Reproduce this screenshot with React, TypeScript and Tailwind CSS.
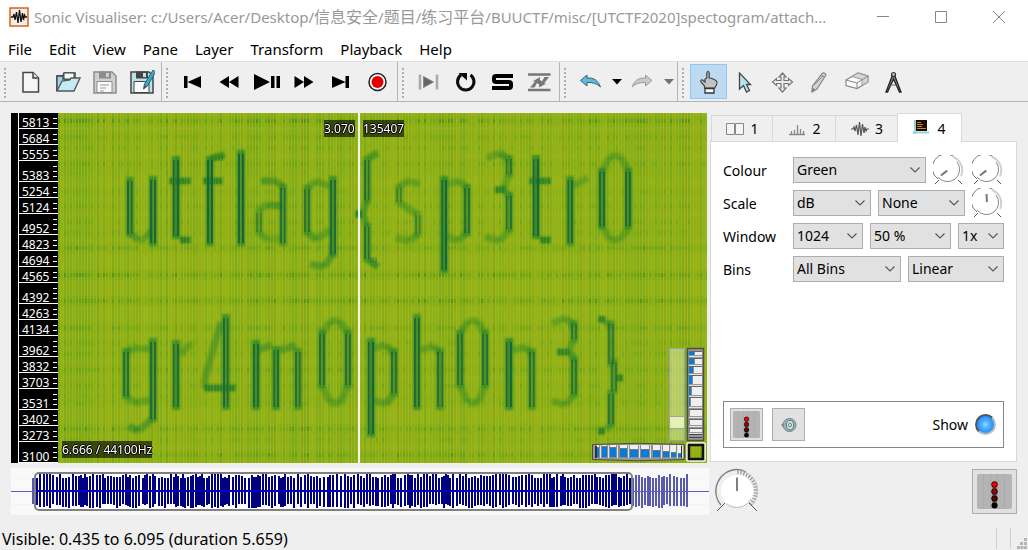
import React, { useState } from "react";
import type { ReactNode } from "react";
import clsx from "clsx";

/* ---------- helpers ---------- */

const noise = (n: number) => {
  const v = Math.sin(n * 127.1 + 311.7) * 43758.5453;
  return v - Math.floor(v);
};

/* ---------- spectrogram ---------- */

// Strong tones: [time position, top, bottom, weight]
const tones: [number, number, number, number][] = [
  [130, 179, 235, 0.9], [153, 178, 244, 1], [176, 158, 237, 1], [210, 158, 244, 1],
  [241, 152, 244, 1], [283, 186, 244, 0.8], [259, 211, 233, 0.5], [307, 187, 233, 0.7],
  [333, 178, 255, 0.9], [367, 158, 201, 0.8], [367, 225, 260, 0.8], [399, 186, 203, 0.5],
  [418, 213, 235, 0.5], [444, 178, 271, 1], [467, 186, 234, 0.8], [509, 157, 175, 0.7],
  [509, 194, 230, 0.8], [536, 157, 237, 1], [570, 178, 244, 0.9], [602, 170, 227, 0.9],
  [628, 170, 227, 0.9], [126, 350, 397, 0.8], [153, 340, 420, 0.9], [176, 342, 408, 0.9],
  [226, 316, 408, 0.9], [256, 342, 408, 0.9], [276, 348, 408, 0.9], [298, 350, 408, 0.8],
  [322, 332, 386, 0.8], [348, 332, 386, 0.8], [371, 340, 435, 1], [394, 350, 394, 0.8],
  [417, 316, 408, 0.9], [440, 350, 408, 0.8], [460, 332, 386, 0.8], [485, 332, 386, 0.8],
  [509, 340, 408, 1], [532, 350, 408, 0.8], [574, 322, 340, 0.7], [574, 358, 395, 0.7],
  [611, 322, 365, 0.6], [614, 360, 392, 0.6], [611, 392, 425, 0.7],
];

// Short sweeps: [x1, y1, x2, y2, weight]
const sweeps: [number, number, number, number, number][] = [
  [132, 235, 138, 240, 0.5], [138, 240, 146, 239, 0.4], [146, 238, 152, 230, 0.5],
  [169, 181, 191, 181, 0.7], [180, 240, 191, 240, 0.8],
  [203, 181, 223, 181, 0.7], [211, 158, 225, 155, 0.7],
  [261, 181, 277, 181, 0.6], [277, 181, 284, 188, 0.5], [259, 210, 268, 204, 0.4],
  [268, 205, 282, 206, 0.6], [260, 234, 268, 240, 0.4], [268, 240, 281, 238, 0.3],
  [308, 188, 315, 181, 0.4], [315, 181, 330, 186, 0.4], [308, 233, 316, 240, 0.5],
  [316, 240, 330, 230, 0.4], [310, 264, 324, 267, 0.5], [324, 267, 333, 254, 0.5],
  [368, 158, 378, 153, 0.6], [355, 214, 363, 214, 0.8], [363, 213, 367, 200, 0.6],
  [363, 214, 367, 227, 0.6], [368, 260, 378, 267, 0.7],
  [399, 188, 406, 181, 0.4], [406, 181, 420, 184, 0.4], [400, 203, 416, 214, 0.4],
  [418, 234, 410, 241, 0.4], [410, 241, 396, 238, 0.4],
  [447, 184, 460, 181, 0.4], [460, 181, 467, 188, 0.4], [447, 237, 458, 241, 0.4],
  [458, 241, 468, 232, 0.4],
  [487, 158, 500, 153, 0.4], [500, 153, 509, 160, 0.6], [495, 190, 506, 189, 0.7],
  [509, 174, 504, 188, 0.4], [504, 189, 510, 198, 0.5], [510, 230, 500, 241, 0.4],
  [500, 241, 485, 237, 0.4],
  [529, 181, 551, 181, 0.7], [540, 240, 551, 240, 0.8],
  [573, 186, 588, 178, 0.4], [602, 172, 610, 156, 0.4], [610, 156, 620, 156, 0.4],
  [620, 156, 629, 172, 0.4], [602, 226, 610, 240, 0.4], [610, 240, 620, 240, 0.4],
  [620, 240, 629, 226, 0.4],
  [127, 352, 133, 348, 0.5], [133, 348, 150, 349, 0.4], [127, 397, 135, 403, 0.4],
  [135, 403, 150, 400, 0.4], [129, 426, 138, 431, 0.6], [138, 431, 152, 419, 0.5],
  [181, 355, 185, 348, 0.4], [185, 348, 192, 345, 0.4],
  [221, 322, 205, 378, 0.5], [205, 378, 205, 388, 0.5], [204, 388, 236, 388, 0.7],
  [258, 350, 272, 345, 0.5], [280, 350, 296, 346, 0.5],
  [322, 334, 330, 321, 0.4], [330, 321, 340, 321, 0.4], [340, 321, 348, 334, 0.4],
  [322, 386, 330, 402, 0.4], [330, 403, 340, 403, 0.4], [340, 403, 348, 386, 0.4],
  [374, 348, 386, 345, 0.4], [386, 345, 394, 354, 0.5], [374, 401, 386, 404, 0.4],
  [386, 404, 394, 394, 0.5], [421, 350, 434, 346, 0.4], [434, 346, 440, 354, 0.4],
  [460, 334, 468, 321, 0.4], [468, 321, 478, 321, 0.4], [478, 321, 485, 334, 0.4],
  [460, 386, 468, 402, 0.4], [468, 403, 478, 403, 0.4], [478, 403, 485, 386, 0.4],
  [513, 350, 526, 347, 0.4], [526, 347, 532, 356, 0.4],
  [552, 323, 566, 318, 0.4], [566, 318, 574, 326, 0.5], [574, 340, 568, 352, 0.4],
  [557, 352, 570, 352, 0.7], [570, 352, 575, 362, 0.5], [575, 394, 565, 405, 0.4],
  [565, 405, 552, 401, 0.4],
  [598, 319, 606, 320, 0.7], [606, 321, 611, 328, 0.5], [616, 378, 623, 378, 0.8],
  [611, 424, 606, 430, 0.4], [598, 431, 605, 431, 0.8],
];

const harmonics: [number, number][] = [
  [121, 0.8], [137, 0.5], [148, 0.4], [164, 0.5], [173, 0.3], [192, 0.4], [206, 0.4],
  [222, 0.4], [233, 0.4], [248, 0.7], [275, 0.8], [301, 0.8], [328, 0.6], [343, 0.4],
  [354, 0.4], [370, 0.5], [386, 0.4], [396, 0.3], [403, 0.4], [429, 0.7], [440, 0.4],
  [455, 0.7],
];

const columns = Array.from({ length: 217 }, (_, i) => ({
  x: 58 + i * 3,
  dark: noise(i) * 0.55,
  light: noise(i + 900),
}));

function Spectrogram() {
  const dots = ["", "", ""];
  harmonics.forEach(([y, strength], r) => {
    columns.forEach(({ x, dark }, c) => {
      const level = strength * (dark * 1.1 + noise(r * 331 + c) * 0.5);
      if (level > 0.25) {
        dots[level > 0.68 ? 2 : level > 0.45 ? 1 : 0] += `M${x} ${y - 2}h2v4h-2z`;
      }
    });
  });
  return (
    <svg
      role="img"
      aria-label="Spectrogram reading utflag{sp3tr0gr4m0ph0n3}"
      viewBox="58 113 649 350"
      preserveAspectRatio="none"
      className="absolute inset-0 h-full w-full"
    >
      <defs>
        <filter id="soft" x="-5%" y="-5%" width="110%" height="110%">
          <feGaussianBlur stdDeviation="1.3" />
        </filter>
      </defs>
      <rect x="58" y="113" width="649" height="350" fill="#9cb71a" />
      <g fill="#4f9c20" filter="url(#soft)">
        {harmonics.map(([y, s]) => (
          <rect key={y} x="58" y={y - 5} width="649" height="10" opacity={s * 0.16} />
        ))}
      </g>
      {columns.map(({ x, dark, light }) => (
        <g key={x}>
          <rect x={x} y="113" width="2" height="350" fill="#57991e" opacity={0.08 + dark * 0.6} />
          {light > 0.6 && <rect x={x + 2} y="113" width="1" height="350" fill="#aab216" opacity="0.8" />}
        </g>
      ))}
      <path d={dots[0]} fill="#3f8f22" opacity="0.18" />
      <path d={dots[1]} fill="#35862a" opacity="0.28" />
      <path d={dots[2]} fill="#2b7c2c" opacity="0.45" />
      <g filter="url(#soft)">
        {tones.map(([x, a, b, w], i) => (
          <rect key={i} x={x - 4} y={a - 2} width="8" height={b - a + 4} fill="#22862a" opacity={w * 0.8} />
        ))}
        {sweeps.map(([x1, y1, x2, y2, w], i) => (
          <line key={i} x1={x1} y1={y1} x2={x2} y2={y2} stroke="#1f8228" strokeWidth="7" opacity={w * 0.95} />
        ))}
      </g>
      <g fill="#17563f">
        {tones.map(([x, a, b, w], i) => (
          <g key={i} opacity={w * 0.75}>
            <rect x={x - 3} y={a + 2} width="2" height={b - a - 3} />
            <rect x={x + 1} y={a + 2} width="2" height={b - a - 3} />
          </g>
        ))}
      </g>
      <g fill="#1c6a35" opacity="0.35">
        {sweeps.filter((s) => s[4] >= 0.7).map(([x1, y1, x2], i) => (
          <g key={i}>
            {Array.from({ length: Math.floor((x2 - x1) / 3) }, (_, k) => (
              <rect key={k} x={x1 + 1 + k * 3} y={y1 - 3} width="2" height="6" />
            ))}
          </g>
        ))}
      </g>
      {/* faint column texture carried over the tones */}
      {columns.filter((c) => c.light > 0.75).map(({ x }) => (
        <rect key={x} x={x + 2} y="113" width="1" height="350" fill="#a5b018" opacity="0.25" />
      ))}
    </svg>
  );
}

const wheelH = [
  [597, 2, 9], [602, 5, 10], [610, 6, 9], [620, 7, 8], [630, 8, 7],
  [641, 8, 7], [653, 7, 6], [663, 6, 5], [671, 5, 4], [678, 3, 3],
];
const wheelV = [
  [352, 3, 5], [359, 5, 5], [367, 6, 4], [376, 8, 3], [387, 8, 2],
  [398, 8, 1], [410, 6, 0], [420, 5, 0], [429, 3, 0],
];

function PaneNavigator() {
  return (
    <svg width="115" height="116" viewBox="592 347 115 116" className="absolute right-0 bottom-0">
      <rect x="669.5" y="348.5" width="15" height="92" fill="#e8f5c8" fillOpacity="0.45" stroke="#a39fae" />
      <rect x="669.5" y="416.5" width="15" height="12" fill="#f6ffd8" fillOpacity="0.7" stroke="#a39fae" />
      <path d="M592.5 444.5Q638 442 684.5 444.5V459.500Q638 462 592.5 459.500Z" fill="#989898" stroke="#4b4f3d" />
      <rect x="595" y="446" width="88" height="12" fill="#8c8c8c" />
      <rect x="595" y="446" width="2" height="12" fill="#333" />
      <rect x="600" y="446" width="1" height="12" fill="#fff" />
      <rect x="681" y="446" width="1" height="12" fill="#333" />
      {wheelH.map(([x, w, h]) => (
        <g key={x}>
          <rect x={x} y="445" width={w} height="12" fill="#efefef" />
          <rect x={x} y={457 - h} width={w} height={h} fill="#087bd8" />
          <rect x={x} y={456 - h} width={w} height="1" fill="#777" />
          <rect x={x + w + 1} y="445" width="1" height="13" fill="#e2e2e2" />
        </g>
      ))}
      <rect x="687.5" y="348.5" width="16" height="92" fill="#989898" stroke="#4b4f3d" strokeWidth="1.500" />
      {wheelV.map(([y, h, w]) => (
        <g key={y}>
          <rect x="689" y={y - 1} width="13" height="1" fill="#666" />
          <rect x="689" y={y} width="13" height={h} fill="#efefef" />
          <rect x="689" y={y} width={w} height={h} fill="#087bd8" />
          <rect x={689 + w} y={y} width="1" height={h} fill="#888" />
          <rect x="689" y={y + h + 1} width="13" height="1" fill="#e2e2e2" />
        </g>
      ))}
      <path d="M689 434.500h13M689 437.500h13" stroke="#444" />
      <rect x="687" y="443" width="18" height="18" rx="1" fill="none" stroke="#fff" strokeWidth="1.500" />
      <rect x="689" y="445" width="14" height="14" fill="none" stroke="#111" strokeWidth="2.500" />
    </svg>
  );
}

const scaleLabels: { value: string; tall?: boolean }[] = [
  { value: "5813" }, { value: "5684" }, { value: "5555" }, { value: "5383", tall: true },
  { value: "5254" }, { value: "5124" }, { value: "4952", tall: true }, { value: "4823" },
  { value: "4694" }, { value: "4565" }, { value: "4392", tall: true }, { value: "4263" },
  { value: "4134" }, { value: "3962", tall: true }, { value: "3832" }, { value: "3703" },
  { value: "3531", tall: true }, { value: "3402" }, { value: "3273" }, { value: "3100", tall: true },
];

function FrequencyScale() {
  return (
    <div className="flex w-[47px] shrink-0 bg-black pl-[7px]">
      <div className="flex w-full flex-col border-l border-white">
        {scaleLabels.map(({ value, tall }) => (
          <div
            key={value}
            className={clsx(
              "flex items-end justify-between border-b border-white pl-[3px] text-[12px] leading-[10px] text-white",
              tall ? "h-[21px]" : "h-[16px]",
            )}
          >
            <span>{value}</span>
            <span className="flex flex-col gap-[4px] pr-px pb-[4px]">
              {tall && <i className="h-px w-[4px] bg-white" />}
              <i className="h-px w-[4px] bg-white" />
              <i className="h-px w-[4px] bg-white" />
            </span>
          </div>
        ))}
      </div>
    </div>
  );
}

const readout =
  "absolute bg-black/60 text-[12px] leading-[17px] text-white [text-shadow:1px_0_#000,-1px_0_#000,0_1px_#000,0_-1px_#000]";

/* ---------- overview waveform ---------- */

function Overview() {
  let d = "";
  let x = 32;
  let n = 0;
  while (x < 689) {
    const run = noise(n + 40) > 0.84 ? 2 + Math.floor(noise(n + 80) * 4) : 1;
    for (let k = 0; k < run && x < 689; k++) {
      const top = 474 + Math.floor(noise(n * 7 + k) * 5);
      const bottom = 508 - Math.floor(noise(n * 11 + k) * 5);
      d += `M${x} ${top}h2v${bottom - top}h-2z`;
      x += 2;
    }
    x += noise(n + 7) > 0.85 ? 2 : 1;
    n++;
  }
  return (
    <svg
      role="img"
      aria-label="Waveform overview"
      viewBox="11 468 698 47"
      preserveAspectRatio="none"
      className="block h-[47px] w-full"
      shapeRendering="crispEdges"
    >
      <rect x="11" y="468" width="698" height="47" fill="#f9f9f9" />
      <path d="M11 478.500h698M11 504.500h698" stroke="#f0f0f0" />
      <rect x="35" y="473" width="597" height="36" rx="4" fill="#fff" />
      <path d={d} fill="#000080" />
      <path d="M11 491h698" stroke="#0000b0" strokeWidth="1" />
      <path d="M36 491h596" stroke="#0000b4" strokeWidth="2" />
      <path d="M11 468h24v47h-24zM632 468h77v47h-77z" fill="#f9f9f9" opacity="0.36" />
      <rect x="35" y="473" width="597" height="37" rx="4" fill="none" stroke="#808080" strokeWidth="2" shapeRendering="auto" />
    </svg>
  );
}

/* ---------- toolbar ---------- */

function Icon({ children }: { children: ReactNode }) {
  return (
    <svg width="26" height="26" viewBox="0 0 26 26" fill="none" aria-hidden="true">
      {children}
    </svg>
  );
}

function Tool({ label, active, children }: { label: string; active?: boolean; children: ReactNode }) {
  return (
    <button
      type="button"
      aria-label={label}
      aria-pressed={active}
      className={clsx(
        "flex h-[35px] w-[37px] shrink-0 items-center justify-center border",
        active ? "border-[#8fc8f6] bg-[#bedaf2]" : "border-transparent",
      )}
    >
      {children}
    </button>
  );
}

function ToolGroup({ children, last }: { children: ReactNode; last?: boolean }) {
  return (
    <div className={clsx("flex items-center", !last && "border-r border-[#b4b4b4] pr-px")}>
      <svg width="12" height="34" viewBox="0 0 12 34" aria-hidden="true">
        <path d="M5 3v31" stroke="#b0b0b0" strokeWidth="2" strokeDasharray="2 2" />
      </svg>
      {children}
    </div>
  );
}

const MenuArrow = ({ color, label }: { color: string; label: string }) => (
  <button type="button" aria-label={label} className="flex h-[35px] w-[15px] items-center justify-center">
    <svg width="10" height="6" viewBox="0 0 10 6" aria-hidden="true">
      <path d="M0 0h10L5 5.500z" fill={color} />
    </svg>
  </button>
);

const floppy = (body: string, line: string) => (
  <>
    <path d="M2 3h18l4 4v17H2z" fill={body} stroke={line} strokeWidth="1.500" />
    <path d="M7 2.500h12v7H7z" fill={line} />
    <path d="M14 4h3v4h-3z" fill={body} />
    <path d="M5 12.500h15v11H5z" fill="#fafafa" stroke={line} />
  </>
);

function Toolbar() {
  return (
    <div role="toolbar" className="flex h-[41px] shrink-0 border-t border-b border-t-[#e0e0e0] border-b-[#b4b4b4] bg-[#efefef]">
      <ToolGroup>
        <Tool label="New">
          <Icon>
            <path d="M5 3.500h10l5.500 5.500v14H5z" fill="#f6f6f6" stroke="#444" strokeWidth="1.500" />
            <path d="M15 3.500V9h5.500" fill="#ddd" stroke="#444" strokeWidth="1.500" />
          </Icon>
        </Tool>
        <Tool label="Open">
          <Icon>
            <path d="M2 22V7h6l1-3h11v6" fill="#fff" stroke="#444" strokeWidth="1.500" />
            <path d="M2 22V7h6v3h13v3" fill="#9fd4e4" stroke="#444" strokeWidth="1.300" />
            <path d="M9 4h10v6H9z" fill="#fafafa" stroke="#444" />
            <path d="M2 22L7 12l8-1 1-2h9l-6 13z" fill="#c3eaf5" stroke="#555" strokeWidth="1.300" />
          </Icon>
        </Tool>
        <Tool label="Save">
          <Icon>
            {floppy("#d0d0d0", "#8d8d8d")}
            <path d="M8 16h9M8 19h6M8 22h4" stroke="#9a9a9a" strokeWidth="1.200" />
          </Icon>
        </Tool>
        <Tool label="Save As">
          <Icon>
            {floppy("#b9e4ef", "#444")}
            <path d="M24 1l2.500 2-8 14-4 3 1-5z" fill="#3ba8c8" stroke="#2c6373" />
            <path d="M14.500 20l1-4 2.500 1.500z" fill="#555" />
          </Icon>
        </Tool>
      </ToolGroup>
      <ToolGroup>
        <Tool label="Rewind to start">
          <Icon><path d="M4 7h3.500v12H4zM21 7v12L7.500 13z" fill="#000" /></Icon>
        </Tool>
        <Tool label="Rewind">
          <Icon><path d="M12 7v12L2.500 13zM21.500 7v12L12 13z" fill="#000" /></Icon>
        </Tool>
        <Tool label="Play / Pause">
          <Icon><path d="M0 5l16 8-16 8zM17 7h3.500v12H17zM22.500 7H26v12h-3.500z" fill="#000" /></Icon>
        </Tool>
        <Tool label="Fast forward">
          <Icon><path d="M3.500 7v12l9.500-6zM13 7v12l9.500-6z" fill="#000" /></Icon>
        </Tool>
        <Tool label="Fast forward to end">
          <Icon><path d="M4 7v12l13.500-6zM17.500 7H21v12h-3.500z" fill="#000" /></Icon>
        </Tool>
        <Tool label="Record">
          <Icon>
            <circle cx="12.500" cy="13" r="8.500" fill="#fff" stroke="#222" strokeWidth="1.500" />
            <circle cx="12.500" cy="13" r="6" fill="#e60000" />
          </Icon>
        </Tool>
      </ToolGroup>
      <ToolGroup>
        <Tool label="Constrain playback to selection">
          <Icon>
            <path d="M4 5.500v15M21 5.500v15" stroke="#a9a9a9" strokeWidth="2.500" />
            <path d="M7.500 7.500l10 5.500-10 5.500z" fill="#666" stroke="#888" />
          </Icon>
        </Tool>
        <Tool label="Loop playback">
          <Icon>
            <path d="M17.500 6a8.200 8.200 0 1 1-9.500 0" stroke="#0a0a0a" strokeWidth="3" />
            <path d="M5.500 4h8.500v7.500z" fill="#0a0a0a" />
          </Icon>
        </Tool>
        <Tool label="Solo current pane">
          <Icon>
            <path d="M23 7H6Q4 7 4 9v2q0 2 2 2h13q2 0 2 2v2q0 2-2 2H2" stroke="#000" strokeWidth="4" />
          </Icon>
        </Tool>
        <Tool label="Align file timelines">
          <Icon>
            <path d="M1 5.500h22.500M1 21h22.500" stroke="#777" strokeWidth="2.500" />
            <path d="M3 18.500l5-6H5.500L13 8l-.5 8-2.500-2-2.500 4.500zM22 8l-5 6.500h2.500L12 18.500l.5-8 2.500 2L17.500 8z" fill="#777" />
          </Icon>
        </Tool>
      </ToolGroup>
      <ToolGroup>
        <Tool label="Undo">
          <Icon><path d="M2.500 11.500L9 6v3q10-1 13.500 9-5-5-13.500-4.500v3.500z" fill="#5bbcdc" stroke="#38606c" /></Icon>
        </Tool>
        <MenuArrow color="#000" label="Undo history" />
        <Tool label="Redo">
          <Icon><path d="M22 11.500L15.500 6v3Q5.500 8 2 18q5-5 13.500-4.500v3.500z" fill="#c9c9c9" stroke="#9c9c9c" /></Icon>
        </Tool>
        <MenuArrow color="#727272" label="Redo history" />
      </ToolGroup>
      <ToolGroup last>
        <Tool label="Navigate" active>
          <Icon>
            <path d="M8.500 19v-2L5 13q-.8-2.500 1.200-2.200L9 13V10l1.800-1V4q1.200-3.500 2.400 0v5l2.300.300 2 1L20 11.500q1.500 1 .8 3.500l-2 4z" fill="#c2c2c2" stroke="#444" strokeWidth="1.200" />
            <path d="M9 19.500h9V24H9z" fill="#fff" stroke="#333" strokeWidth="1.300" />
          </Icon>
        </Tool>
        <Tool label="Select">
          <Icon>
            <path d="M6.500 4v16l4-3.500 3 6.500 3-1.500-3-6h4z" fill="#b7e4ef" stroke="#444" strokeWidth="1.300" />
          </Icon>
        </Tool>
        <Tool label="Edit">
          <Icon>
            <path d="M12.500 4l3.500 4h-2v3.500h4.500v-2l4 3.500-4 3.500v-2H14V19h2l-3.500 4L9 19h2v-4.500H6.500v2l-4-3.500 4-3.500v2H11V8H9z" fill="#eee" stroke="#777" strokeWidth="1.200" />
          </Icon>
        </Tool>
        <Tool label="Draw">
          <Icon>
            <path d="M15.500 4q3-.500 3.500 2L10 20l-5 3 .5-6z" fill="#d2d2d2" stroke="#888" strokeWidth="1.200" />
            <path d="M14 6l4 2.500M7 16l9-9M5 23l.500-4 2.500 2z" stroke="#888" fill="#777" />
          </Icon>
        </Tool>
        <Tool label="Erase">
          <Icon>
            <path d="M2 11l12-7 10 3v6l-11 6.500-11-3z" fill="#fafafa" stroke="#888" strokeWidth="1.200" />
            <path d="M8 7.500L14 4l10 3v6l-6 3.500V10.500z" fill="#d4d4d4" stroke="#999" />
            <path d="M2 11l11 3L24 7M13 14v5.500" stroke="#888" />
          </Icon>
        </Tool>
        <Tool label="Measure">
          <Icon>
            <path d="M11.500 6L5 23h1.500l6-13 6 13H20L13.500 6" fill="#888" stroke="#222" strokeWidth="1.300" />
            <circle cx="12.500" cy="5.500" r="2" fill="#bbb" stroke="#333" strokeWidth="1.200" />
            <path d="M9 17.500l1.500-1.500h4l1.500 1.500" stroke="#666" />
          </Icon>
        </Tool>
      </ToolGroup>
    </div>
  );
}

/* ---------- property panel ---------- */

function Combo({ label, value, className }: { label: string; value: string; className: string }) {
  return (
    <span className={clsx("relative block h-[26px] shrink-0", className)}>
      <select
        aria-label={label}
        defaultValue={value}
        className="h-full w-full appearance-none border border-[#adadad] bg-[#e1e1e1] pl-[3px] text-[14px] leading-[24px] text-black"
      >
        <option>{value}</option>
      </select>
      <svg width="10" height="6" viewBox="0 0 10 6" className="pointer-events-none absolute top-[10px] right-[6px]" aria-hidden="true">
        <path d="M.5.500L5 5 9.500.5" fill="none" stroke="#555" strokeWidth="1.100" />
      </svg>
    </span>
  );
}

function Dial({ label, angle }: { label: string; angle: number }) {
  const rad = (angle * Math.PI) / 180;
  const dx = Math.sin(rad);
  const dy = -Math.cos(rad);
  return (
    <label className="relative block h-[30px] w-[32px] shrink-0">
      <svg width="32" height="30" viewBox="0 0 32 30" fill="none" aria-hidden="true">
        <path d="M5 24A13.500 13.500 0 0 1 21 1.500" stroke="#777" strokeWidth="1" />
        <path d="M20 2A14 14 0 0 1 28 21" stroke="#d0d0d0" strokeWidth="2" />
        <path d="M24 7A12 12 0 0 1 5 22" stroke="#888" strokeWidth="1" />
        <path d="M2 29l4-4M29 29l-4-4" stroke="#555" />
        <path
          d={`M${15 + dx} ${15 + dy}L${15 + dx * 9} ${15 + dy * 9}`}
          stroke="#777"
          strokeWidth="2"
        />
      </svg>
      <input type="range" aria-label={label} className="absolute inset-0 h-full w-full opacity-0" />
    </label>
  );
}

function Row({ label, children }: { label: string; children: ReactNode }) {
  return (
    <div className="flex h-[26px] items-center">
      <span className="w-[70px] shrink-0 text-[14px]">{label}</span>
      <div className="flex items-center gap-[7px]">{children}</div>
    </div>
  );
}

function LevelMeter({ size }: { size: number }) {
  return (
    <svg width={size} height={size} viewBox="0 0 35 35" aria-hidden="true">
      <rect width="35" height="35" rx="2" fill="#b4b4b4" />
      <path d="M6.500 0v35M13.500 0v35M20.500 0v35M27.500 0v35" stroke="#aaa" />
      <path d="M17.500 8v24" stroke="#777" strokeWidth="5" />
      <circle cx="17.500" cy="10.500" r="2.800" fill="#f00" stroke="#300" />
      <circle cx="17.500" cy="17.500" r="2.800" fill="#a80000" stroke="#200" />
      <circle cx="17.500" cy="24.500" r="2.800" fill="#5a0000" stroke="#100" />
      <circle cx="17.500" cy="31.500" r="3" fill="#000" />
    </svg>
  );
}

const tabIcons: ReactNode[] = [
  <svg key="1" width="18" height="14" viewBox="0 0 18 14" fill="#f5f5f5" stroke="#888">
    <path d="M.5 1.500h8v11h-8zM9.500 1.500h8v11h-8z" />
  </svg>,
  <svg key="2" width="18" height="14" viewBox="0 0 18 14" stroke="#888">
    <path d="M1 12.500h16M3.500 12V9M6.500 12V8M9.500 12V3M12.500 12V7M15.500 12V9" strokeWidth="1.300" />
  </svg>,
  <svg key="3" width="18" height="16" viewBox="0 0 18 16" stroke="#555" fill="none">
    <path d="M0 8h2l1-2 1 4 1.500-6 1.500 10L8.500 1l1.500 14 1.500-12L13 12l1-6 1 4 1-2h2" strokeWidth="1.200" />
  </svg>,
  <svg key="4" width="18" height="18" viewBox="0 0 18 18">
    <path d="M2 1v14M0 13.500h16" stroke="#8fd4e8" strokeWidth="2" />
    <path d="M3 1h11v11H3z" fill="#1c0e00" />
    <path d="M4 3.500h4M4 5.500h6M4 7.500h5M4 9.500h9" stroke="#c9822c" />
  </svg>,
];

function LayerPanel() {
  const [show, setShow] = useState(true);
  return (
    <section className="flex min-h-0 flex-1 flex-col">
      <div role="tablist" className="flex h-[28px] items-end pl-px">
        {tabIcons.map((icon, i) => {
          const selected = i === 3;
          return (
            <button
              key={i}
              type="button"
              role="tab"
              aria-selected={selected}
              className={clsx(
                "flex items-center justify-center gap-[6px] border-t border-[#d9d9d9] text-[14px]",
                selected
                  ? "relative z-10 -mb-px h-[29px] w-[65px] border-x bg-white"
                  : "h-[26px] border-l bg-[#efefef] pl-px",
                i === 0 && "w-[61px]",
                i === 1 && "w-[63px]",
                i === 2 && "w-[62px]",
              )}
            >
              {icon}
              {i + 1}
            </button>
          );
        })}
      </div>
      <div className="flex min-h-0 flex-1 flex-col border border-[#d9d9d9] bg-white px-[12px] pt-[15px] pb-[13px]">
        <div className="flex flex-col gap-[7px]">
          <Row label="Colour">
            <Combo label="Colour" value="Green" className="w-[133px]" />
            <Dial label="Threshold" angle={-128} />
            <Dial label="Colour rotation" angle={-128} />
          </Row>
          <Row label="Scale">
            <Combo label="Scale" value="dB" className="w-[78px]" />
            <Combo label="Normalization" value="None" className="w-[87px]" />
            <Dial label="Gain" angle={-3} />
          </Row>
          <Row label="Window">
            <Combo label="Window size" value="1024" className="w-[70px]" />
            <Combo label="Window overlap" value="50 %" className="w-[81px]" />
            <Combo label="Oversampling" value="1x" className="w-[46px]" />
          </Row>
          <Row label="Bins">
            <Combo label="Bin display" value="All Bins" className="w-[108px]" />
            <Combo label="Frequency scale" value="Linear" className="w-[96px]" />
          </Row>
        </div>
        <div className="mt-auto flex h-[47px] items-center border border-[#828790] pr-[7px] pl-[6px]">
          <button type="button" aria-label="Playback level" className="flex h-[33px] w-[33px] items-center justify-center border border-[#adadad] bg-[#e1e1e1]">
            <LevelMeter size={27} />
          </button>
          <button type="button" aria-label="Playback sound" className="ml-[9px] flex h-[33px] w-[33px] items-center justify-center border border-[#adadad] bg-[#e1e1e1]">
            <svg width="16" height="16" viewBox="0 0 16 16" aria-hidden="true">
              <path d="M0 8l6-5v10z" fill="#71878c" />
              <circle cx="8.500" cy="8" r="6.500" fill="#9ab0b5" stroke="#6d8388" />
              <ellipse cx="9" cy="8" rx="3.500" ry="4.500" fill="#dcebee" stroke="#647a80" />
              <ellipse cx="9" cy="8" rx="1.500" ry="2" fill="none" stroke="#647a80" />
            </svg>
          </button>
          <label className="ml-auto flex items-center gap-[7px] text-[14px]">
            Show
            <input
              type="checkbox"
              checked={show}
              onChange={(e) => setShow(e.target.checked)}
              className="h-[21px] w-[21px] appearance-none rounded-full border-2 border-t-[#555] border-r-[#bbb] border-b-[#bbb] border-l-[#555] bg-[#123a5c] checked:bg-[radial-gradient(circle_at_50%_50%,#9fd4ff_0,#55b0ff_30%,#1e90ff_70%,#126cc8_100%)]"
            />
          </label>
        </div>
      </div>
    </section>
  );
}

function SpeedDial() {
  const ticks = Array.from({ length: 15 }, (_, i) => {
    const a = ((i * 9.3 + 3) * Math.PI) / 180;
    return `M${23 + Math.sin(a) * 17} ${23 - Math.cos(a) * 17}L${23 + Math.sin(a) * 21} ${23 - Math.cos(a) * 21}`;
  }).join("");
  return (
    <label className="relative block h-[47px] w-[47px]">
      <svg width="47" height="47" viewBox="0 0 47 47" fill="none" aria-hidden="true">
        <path d="M7 37A21.500 21.500 0 0 1 23 1.500Q28 1.500 32 4" stroke="#808080" strokeWidth="1.300" />
        <path d={ticks} stroke="#999" strokeWidth="1.300" />
        <path d="M31 4A21 21 0 0 1 38 37" stroke="#bbb" />
        <circle cx="23" cy="23" r="16" fill="#fff" />
        <path d="M37 31A16 16 0 0 1 13 36" stroke="#bbb" />
        <path d="M23 9.500V23" stroke="#808080" strokeWidth="2" />
        <path d="M3 43l8-8M43 43l-8-8" stroke="#555" />
      </svg>
      <input type="range" aria-label="Playback speed" className="absolute inset-0 h-full w-full opacity-0" />
    </label>
  );
}

/* ---------- window ---------- */

const menus = ["File", "Edit", "View", "Pane", "Layer", "Transform", "Playback", "Help"];

export default function App() {
  return (
    <div className="flex h-screen min-h-[540px] flex-col bg-[#efefef] font-['Noto_Sans','Noto_Sans_CJK_SC',sans-serif] text-[15px] text-black">
      <header className="flex h-[34px] shrink-0 items-center bg-white pl-[9px]">
        <svg width="20" height="20" viewBox="0 0 20 20" fill="none" aria-hidden="true">
          <rect x="1" y="1" width="18" height="18" fill="#f5efe8" stroke="#d9621e" strokeWidth="1.500" />
          <path d="M2 10h2l1-3 1 6 1.500-8L9 16l1.500-13L12 15l1.500-9 1 7 1-5 1 2H18" stroke="#111" strokeWidth="1.300" />
        </svg>
        <h1 className="min-w-0 flex-1 truncate pl-[5px] text-[15px] leading-[24px] text-[#999]">
          Sonic Visualiser: c:/Users/Acer/Desktop/<span className="text-[16px]">信息安全</span>/
          <span className="text-[16px]">题目</span>/<span className="text-[16px]">练习平台</span>
          /BUUCTF/misc/[UTCTF2020]spectogram/attach...
        </h1>
        <div className="flex w-[174px] shrink-0 text-[#888]">
          <button type="button" aria-label="Minimize" className="flex h-[34px] w-[58px] items-center justify-center">
            <svg width="12" height="12" viewBox="0 0 12 12" stroke="currentColor"><path d="M0 5.500h12" /></svg>
          </button>
          <button type="button" aria-label="Maximize" className="flex h-[34px] w-[58px] items-center justify-center">
            <svg width="12" height="12" viewBox="0 0 12 12" fill="none" stroke="currentColor"><path d="M.5.500h11v11H.5z" /></svg>
          </button>
          <button type="button" aria-label="Close" className="flex h-[34px] w-[58px] items-center justify-center">
            <svg width="12" height="12" viewBox="0 0 12 12" stroke="currentColor"><path d="M0 0l12 12M12 0L0 12" /></svg>
          </button>
        </div>
      </header>
      <nav className="flex h-[27px] shrink-0 gap-[17px] bg-white pl-[8px]">
        {menus.map((m) => (
          <button key={m} type="button" className="leading-[30px]">
            {m}
          </button>
        ))}
      </nav>
      <Toolbar />

      <main className="flex min-h-0 flex-1 gap-px pt-[11px] pr-[11px] pl-[11px]">
        <div className="flex min-w-0 flex-1 flex-col gap-[5px]">
          <div className="flex min-h-0 flex-1 pr-[2px]">
            <FrequencyScale />
            <div className="relative min-w-0 flex-1 overflow-hidden">
              <Spectrogram />
              <div className="absolute inset-y-0 left-[300px] w-[2px] bg-[#f2f2f2]" />
              <div className={clsx(readout, "top-[7px] left-[266px]")}>3.070</div>
              <div className={clsx(readout, "top-[7px] left-[305px]")}>135407</div>
              <div className={clsx(readout, "bottom-[5px] left-[4px]")}>6.666 / 44100Hz</div>
              <PaneNavigator />
            </div>
          </div>
          <Overview />
        </div>
        <div className="flex w-[307px] shrink-0 flex-col gap-[6px]">
          <LayerPanel />
          <div className="flex h-[47px] shrink-0 items-center justify-between pl-[4px]">
            <SpeedDial />
            <button type="button" aria-label="Master level" className="flex h-[45px] w-[45px] items-center justify-center border border-[#adadad] bg-[#e1e1e1]">
              <LevelMeter size={35} />
            </button>
          </div>
        </div>
      </main>

      <footer className="flex h-[35px] shrink-0 items-end pl-[2px]">
        <span className="flex-1 text-[16px] leading-[22px]">Visible: 0.435 to 6.095 (duration 5.659)</span>
        <div className="mb-[1px] flex h-[21px] items-end">
          <span className="h-full w-[15px] border-x border-[#d0d0d0]" />
          <svg width="17" height="11" viewBox="0 0 17 11" fill="#b5b5b5" aria-hidden="true">
            <path d="M13 0h3v3h-3zM9 4h3v3H9zM13 4h3v3h-3zM6 8h3v3H6zM9.500 8h3v3h-3zM13 8h3v3h-3z" />
          </svg>
        </div>
      </footer>
    </div>
  );
}
